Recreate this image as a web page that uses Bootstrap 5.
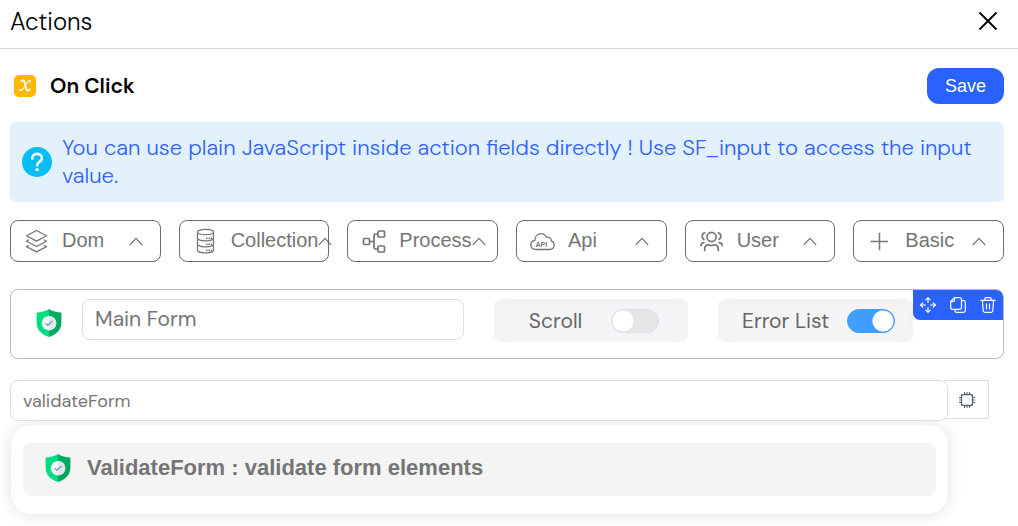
<!DOCTYPE html>
<html lang="en">
<head>
<meta charset="utf-8">
<meta name="viewport" content="width=device-width, initial-scale=1">
<title>Actions</title>
<link href="https://cdn.jsdelivr.net/npm/bootstrap@5.3.0/dist/css/bootstrap.min.css" rel="stylesheet">
<style>
  body { font-family: "DM Sans", Inter, sans-serif; color: #000; background: #fff; }
  svg { display: block; flex: none; }
  .panel-header { height: 49px; padding: 0 18px 6px 10px; border-bottom: 1px solid #d9dadb; }
  .panel-title { font-size: 24px; line-height: 28px; font-weight: 300; padding-top: 2px; }
  .close-btn { color: #000; }
  .panel-body { padding: 19px 14px 12px 10px; }
  .event-head { gap: 14px; }
  .event-name { font-size: 21px; line-height: 28px; font-weight: 600; }
  .save-btn { width: 77px; height: 36px; border-radius: 12px; background: #2962ff; color: #fff; font: 18px/24px "Liberation Sans", Arial, sans-serif; }
  .save-btn:hover { background: #1f51dd; color: #fff; }
  .hint { margin-top: 18px; padding: 12px; gap: 10px; border-radius: 6px; background: #e3f1fd; color: #2f62fb; font-size: 22px; font-weight: 300; line-height: 28px; }
  .menu-row { display: grid; grid-template-columns: repeat(6, minmax(0, 1fr)); gap: 18px; margin-top: 18px; }
  .menu-btn { height: 42px; padding: 0 17px 0 13px; border: 1px solid #6c6c6c; border-radius: 8px; background: #fff; color: #757575; font: 20px/24px "Liberation Sans", Arial, sans-serif; white-space: nowrap; }
  .menu-btn .caption { margin: 0 0 2px 13px; }
  .action-card { position: relative; margin-top: 27px; height: 70px; padding: 9px 90px 0 25px; border: 1px solid #b9b9b9; border-radius: 8px; }
  .card-fields { display: grid; grid-template-columns: 51fr 26fr 26fr; gap: 30px; margin-left: 20px; }
  .text-field { height: 41px; padding: 0 12px; border: 1px solid #dcdde6; border-radius: 8px; background: #fff; color: #757575; width: 100%; outline-color: #2962ff; }
  .text-field::placeholder { color: #757575; opacity: 1; }
  .name-field { font-size: 21px; padding-bottom: 2px; }
  .search-field { position: relative; font-size: 18px; }
  .switch-box { height: 43px; padding-left: 6px; border-radius: 8px; background: #f5f5f8; box-shadow: inset 0 0 14px #efeff0; color: #666; font-size: 21px; line-height: 28px; }
  .switch-box .form-check-input { width: 48px; height: 24px; margin: 0; border: 1px solid #dcdff0; background-color: #e5e5e5; background-size: 22px 22px; border-radius: 12px; background-image: radial-gradient(circle, #fff 10px, transparent 11px); background-repeat: no-repeat; background-position: left center; }
  .switch-box .form-check-input:checked { background-color: #409eff; border-color: #409eff; background-position: right center; }
  .scroll-switch { gap: 29px; }
  .error-switch { gap: 18px; }
  .card-tools { position: absolute; top: 0; right: 0; height: 30px; width: 90px; background: #2962ff; border-radius: 0 7px 0 7px; }
  .card-tools button { flex: 1; color: #fff; }
  .search-row { margin: 21px 15px 0 0; }
  .chip-btn { width: 45px; height: 39px; margin-left: -4px; border: 1px solid #dcdde6; background: #fff; color: #606266; border-radius: 0; }
  .suggestions { margin: 4px 56px 0 1px; padding: 18px 12px; border-radius: 20px; background: #fff; box-shadow: 0 0 16px rgba(0,0,0,.13); }
  .suggestion { width: 100%; height: 53px; padding: 0 0 4px 22px; gap: 16px; border: 0; border-radius: 8px; background: #f4f4f4; color: #757575; font: bold 22px/28px "Liberation Sans", Arial, sans-serif; }
</style>
</head>
<body>
<svg width="0" height="0" class="position-absolute" aria-hidden="true">
  <symbol id="caret" viewBox="0 0 14 9"><path d="M.8 8 7 1.4 13.2 8" fill="none" stroke="#757575" stroke-width="1.1"/></symbol>
  <symbol id="shield" viewBox="0 0 26 28">
    <path d="M13 0C10 2.600 5 3.200.6 3.400V14c0 6.500 5 11.500 12.400 14z" fill="#00dc82"/>
    <path d="M13 0c3 2.600 8 3.200 12.400 3.400V14c0 6.500-5 11.500-12.400 14z" fill="#00a960"/>
    <circle cx="13" cy="14.200" r="7.300" fill="#f1f6fa"/>
    <path d="M13 6.900a7.300 7.300 0 0 1 0 14.600z" fill="#dfe7ee"/>
    <path d="m9.600 14.300 2.300 2 4.600-4.300" fill="none" stroke="#6fa3ad" stroke-width="1.300"/>
  </symbol>
</svg>

<header class="panel-header d-flex align-items-center justify-content-between">
  <h1 class="panel-title m-0">Actions</h1>
  <button type="button" class="close-btn btn p-0 border-0" aria-label="Close">
    <svg width="24" height="24" viewBox="0 0 24 24" fill="none" stroke="currentColor" stroke-width="1.800"><path d="m3.500 3.500 17 17M20.500 3.500l-17 17"/></svg>
  </button>
</header>

<main class="panel-body">
  <div class="event-head d-flex align-items-center">
    <svg class="ms-1" width="22" height="22" viewBox="0 0 22 22"><rect width="22" height="22" rx="5" fill="#ffb700"/><path d="M7.300 5.800c1.700-.9 2.600-.5 3.100 1.200l2 7.300c.4 1.600 1.500 1.900 3.300.2" fill="none" stroke="#fff" stroke-width="1.900" stroke-linecap="round"/><path d="M16.400 5.900c-2.300-.6-3.700 1.700-5 4.200s-2.800 5.600-5.200 5.300" fill="none" stroke="#fff" stroke-width="1.100" stroke-linecap="round"/><circle cx="16.100" cy="6.300" r="1" fill="#fff"/><circle cx="6.300" cy="15.200" r="1.100" fill="#fff"/></svg>
    <h2 class="event-name m-0 me-auto">On Click</h2>
    <button type="button" class="save-btn btn p-0 border-0">Save</button>
  </div>

  <div class="hint d-flex align-items-center">
    <svg width="30" height="30" viewBox="0 0 30 30"><circle cx="15" cy="15" r="15" fill="#03bdf5"/><path d="M10.200 11.600c0-2.800 2-4.700 4.800-4.700s4.900 1.800 4.900 4.300c0 3.500-4.700 3.600-4.700 7" fill="none" stroke="#fff" stroke-width="2.600" stroke-linecap="round"/><circle cx="15.100" cy="22.600" r="1.700" fill="#fff"/></svg>
    <div>You can use plain JavaScript inside action fields directly ! Use SF_input to access the input value.</div>
  </div>

  <div class="menu-row">
    <button type="button" class="menu-btn d-flex align-items-center">
      <svg width="25" height="26" viewBox="0 0 25 26" fill="none" stroke="#757575" stroke-width="1.300" stroke-linejoin="round"><path d="M12.500 2.500 22.500 7.800l-10 5.300-10-5.300zM5 11.800l-2.500 1.400 10 5.300 10-5.300-2.500-1.400M5 17.200l-2.500 1.400 10 5.300 10-5.300-2.500-1.400"/></svg>
      <span class="caption">Dom</span><svg class="ms-auto" width="14" height="9"><use href="#caret"/></svg>
    </button>
    <button type="button" class="menu-btn d-flex align-items-center">
      <svg width="25" height="26" viewBox="0 0 25 26" fill="none" stroke="#757575" stroke-width="1.200"><ellipse cx="12.500" cy="4" rx="8" ry="2.700"/><path d="M4.500 4v18c0 1.600 3.600 2.900 8 2.900s8-1.300 8-2.900V4M4.500 10c0 1.500 3.600 2.800 8 2.800s8-1.300 8-2.800M4.500 16c0 1.500 3.600 2.800 8 2.800s8-1.300 8-2.800"/><path d="M13 10.200h6M13 16.200h6M13 22.200h6" stroke-width="1.500" stroke-dasharray="1.500 1"/></svg>
      <span class="caption">Collection</span><svg class="ms-auto" width="14" height="9"><use href="#caret"/></svg>
    </button>
    <button type="button" class="menu-btn d-flex align-items-center">
      <svg width="25" height="26" viewBox="0 0 25 26" fill="none" stroke="#757575" stroke-width="1.700"><rect x="2.500" y="10.500" width="6" height="6" rx="1"/><rect x="17" y="3" width="6.500" height="6" rx="1"/><rect x="17" y="18" width="6.500" height="6" rx="1"/><path d="M8.500 13.500H13M17 6h-2.500Q13 6 13 7.500v12q0 1.500 1.500 1.500H17"/></svg>
      <span class="caption">Process</span><svg class="ms-auto" width="14" height="9"><use href="#caret"/></svg>
    </button>
    <button type="button" class="menu-btn d-flex align-items-center">
      <svg width="25" height="26" viewBox="0 0 25 26"><path d="M6 21.500C2.700 21.500.8 19.500.8 17s1.600-4.300 4-4.600C5 8 7.800 5.600 11 5.600c2.800 0 4.600 1.500 5.600 3.600 3-.4 4.800 1.400 4.800 4 1.800.5 2.800 2 2.800 3.900 0 2.500-1.900 4.400-4.500 4.400z" fill="none" stroke="#757575" stroke-width="1.300"/><text x="5.500" y="19" font-size="7" font-weight="bold" font-family="Liberation Sans" fill="#757575">API</text></svg>
      <span class="caption">Api</span><svg class="ms-auto" width="14" height="9"><use href="#caret"/></svg>
    </button>
    <button type="button" class="menu-btn d-flex align-items-center">
      <svg width="25" height="26" viewBox="0 0 25 26" fill="none" stroke="#757575" stroke-width="1.700" stroke-linecap="round"><circle cx="12.500" cy="9" r="4.600"/><path d="M5.700 22.500v-1.800c0-2.200 1.700-3.800 3.800-3.800 1 0 1.800.8 3 .8s2-.8 3-.8c2.100 0 3.800 1.600 3.800 3.800v1.800M5.700 4.800C3.700 5.500 3 7 3.200 8.600c.1 1.200.8 2.200 1.800 2.800M19.300 4.800c2 .7 2.700 2.200 2.500 3.800-.1 1.200-.8 2.200-1.800 2.800M4.900 14.600c-1.900 0-3 1.300-3 3M20.100 14.600c1.900 0 3 1.300 3 3"/></svg>
      <span class="caption">User</span><svg class="ms-auto" width="14" height="9"><use href="#caret"/></svg>
    </button>
    <button type="button" class="menu-btn d-flex align-items-center">
      <svg width="25" height="26" viewBox="0 0 25 26" fill="none" stroke="#757575" stroke-width="1.500"><path d="M3.500 13.500h17.400M12.500 4.800v17.400"/></svg>
      <span class="caption">Basic</span><svg class="ms-auto" width="14" height="9"><use href="#caret"/></svg>
    </button>
  </div>

  <section class="action-card">
    <div class="d-flex align-items-center">
      <svg class="mt-1" width="26" height="28"><use href="#shield"/></svg>
      <div class="card-fields flex-grow-1">
        <input type="text" class="text-field name-field" placeholder="Main Form" aria-label="Form name">
        <div class="switch-box scroll-switch d-flex align-items-center justify-content-center">
          <label for="scroll">Scroll</label>
          <input class="form-check-input" type="checkbox" role="switch" id="scroll">
        </div>
        <div class="switch-box error-switch d-flex align-items-center justify-content-center">
          <label for="errors">Error List</label>
          <input class="form-check-input" type="checkbox" role="switch" id="errors" checked>
        </div>
      </div>
    </div>
    <div class="card-tools d-flex align-items-center">
      <button type="button" class="btn p-0 border-0 d-flex justify-content-center" aria-label="Move"><svg width="16" height="16" viewBox="0 0 16 16" fill="none" stroke="currentColor" stroke-width="1.200" stroke-linecap="round" stroke-linejoin="round"><path d="M8 5.500V.8M5.800 2.800 8 .6l2.200 2.200M8 10.500v4.700M5.800 13.200 8 15.400l2.200-2.200M5.500 8H.8M2.800 5.800.6 8l2.200 2.200M10.500 8h4.700M13.200 5.800 15.400 8l-2.200 2.200"/></svg></button>
      <button type="button" class="btn p-0 border-0 d-flex justify-content-center" aria-label="Copy"><svg width="16" height="16" viewBox="0 0 16 16" fill="none" stroke="currentColor" stroke-width="1.200" stroke-linejoin="round"><path d="M4.500.7h5.300q1.700 0 1.700 1.700v8.200q0 1.700-1.700 1.700H2.400Q.7 12.300.7 10.600V4.500zM.7 4.700h2.100q1.700 0 1.700-1.700V.7M11.500 3.700h2.100q1.700 0 1.700 1.700v8.200q0 1.700-1.700 1.700H6.500q-1.700 0-1.700-1.700v-1.300"/></svg></button>
      <button type="button" class="btn p-0 border-0 d-flex justify-content-center" aria-label="Delete"><svg width="16" height="16" viewBox="0 0 16 16" fill="none" stroke="currentColor" stroke-width="1.200" stroke-linecap="round" stroke-linejoin="round"><path d="M.8 3.300h14.400M4.800 3.300V2q0-1.300 1.300-1.300h3.800q1.300 0 1.300 1.300v1.300M2.400 3.300l.8 10.400q.1 1.600 1.600 1.600h6.400q1.500 0 1.600-1.600l.8-10.400M6.500 6.800v5M9.500 6.800v5"/></svg></button>
    </div>
  </section>

  <div class="search-row d-flex align-items-start">
    <input type="text" class="text-field search-field flex-grow-1" placeholder="validateForm" aria-label="Action">
    <button type="button" class="chip-btn btn flex-shrink-0 d-flex align-items-center justify-content-center p-0" aria-label="Variables"><svg width="18" height="18" viewBox="0 0 18 18" fill="none" stroke="currentColor"><rect x="3.500" y="3.500" width="11" height="11" rx="2" stroke-width="1.300"/><path d="M6.500 1v2.500M9 1v2.500M11.500 1v2.500M6.500 14.500V17M9 14.500V17M11.500 14.500V17M1 6.500h2.500M1 9h2.500M1 11.500h2.500M14.500 6.500H17M14.500 9H17M14.500 11.500H17" stroke="#4a6b92"/></svg></button>
  </div>
  <div class="suggestions">
    <button type="button" class="suggestion d-flex align-items-center text-start"><svg width="26" height="28"><use href="#shield"/></svg>ValidateForm : validate form elements</button>
  </div>
</main>
<script src="https://cdn.jsdelivr.net/npm/bootstrap@5.3.0/dist/js/bootstrap.bundle.min.js"></script>
</body>
</html>
